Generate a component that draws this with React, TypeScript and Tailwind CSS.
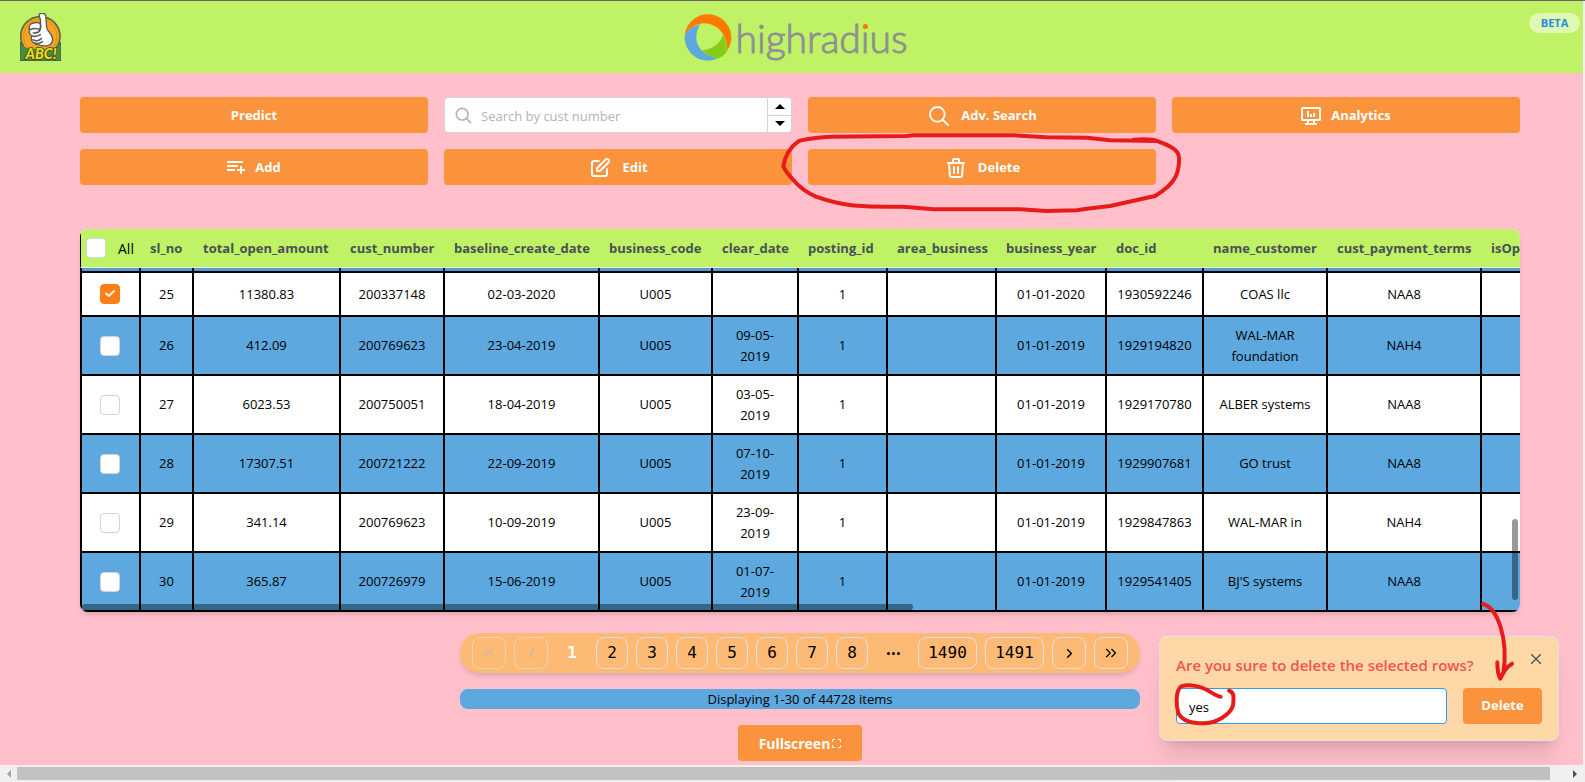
import type { ReactNode } from "react";
import { HiOutlinePencilAlt, HiOutlineTrash } from "react-icons/hi";
import { IoSearchOutline } from "react-icons/io5";
import { ChevronLeft, ChevronRight, ChevronsLeft, ChevronsRight } from "lucide-react";

const columns = [
  { name: "sl_no", width: "w-[53px]" },
  { name: "total_open_amount", width: "w-[147px]" },
  { name: "cust_number", width: "w-[104px]" },
  { name: "baseline_create_date", width: "w-[155px]" },
  { name: "business_code", width: "w-[113px]" },
  { name: "clear_date", width: "w-[86px]" },
  { name: "posting_id", width: "w-[89px]" },
  { name: "area_business", width: "w-[109px]" },
  { name: "business_year", width: "w-[110px]" },
  { name: "doc_id", width: "w-[97px]" },
  { name: "name_customer", width: "w-[124px]" },
  { name: "cust_payment_terms", width: "w-[154px]" },
  { name: "isOpen", width: "w-[120px]" },
];

const rows = [
  ["25", "11380.83", "200337148", "02-03-2020", "U005", "", "1", "", "01-01-2020", "1930592246", "COAS llc", "NAA8", ""],
  ["26", "412.09", "200769623", "23-04-2019", "U005", "09-05-2019", "1", "", "01-01-2019", "1929194820", "WAL-MAR foundation", "NAH4", ""],
  ["27", "6023.53", "200750051", "18-04-2019", "U005", "03-05-2019", "1", "", "01-01-2019", "1929170780", "ALBER systems", "NAA8", ""],
  ["28", "17307.51", "200721222", "22-09-2019", "U005", "07-10-2019", "1", "", "01-01-2019", "1929907681", "GO trust", "NAA8", ""],
  ["29", "341.14", "200769623", "10-09-2019", "U005", "23-09-2019", "1", "", "01-01-2019", "1929847863", "WAL-MAR in", "NAH4", ""],
  ["30", "365.87", "200726979", "15-06-2019", "U005", "01-07-2019", "1", "", "01-01-2019", "1929541405", "BJ'S systems", "NAA8", ""],
];

function AddIcon() {
  return (
    <svg width="18" height="13" viewBox="0 0 18 13" fill="currentColor" aria-hidden="true">
      <path d="M0 0h16v2H0zM0 4h11v2H0zM0 8h8v2H0zM13 5h2v3h3v2h-3v3h-2v-3h-3V8h3z" />
    </svg>
  );
}

function AnalyticsIcon() {
  return (
    <svg width="20" height="18" viewBox="0 0 20 18" fill="currentColor" aria-hidden="true">
      <path
        fillRule="evenodd"
        d="M1.500 0h17A1.500 1.500 0 0 1 20 1.500v11a1.500 1.500 0 0 1-1.500 1.500H14v2h2v2H4v-2h2v-2H1.500A1.500 1.500 0 0 1 0 12.500v-11A1.500 1.500 0 0 1 1.500 0zM2 2v10h16V2zM8 14v2h4v-2z"
      />
      <path d="M6 4h2v6H6zM9 7h2v3H9zM12 6h2v4h-2z" />
    </svg>
  );
}

function ThumbsUpLogo() {
  return (
    <svg width="41" height="48" viewBox="0 0 123 144" role="img" aria-label="ABC">
      <path d="M0 90h123v54H0z" fill="#4d8b3a" stroke="#3f5a4a" strokeWidth="4" />
      <circle cx="61" cy="70" r="59" fill="#f9a51f" stroke="#5c6a3c" strokeWidth="5" />
      <circle cx="61" cy="70" r="50" fill="none" stroke="#d98a22" strokeWidth="3" />
      <path d="M2 98c30 14 90 14 119 0v44H2z" fill="#4d8b3a" />
      <path
        d="M57 6c2-7 18-7 20 1 2 15 1 28 4 40 4 10 16 18 17 30 0 12-7 20-13 20-14 4-36 0-46-9-7-7-6-14-3-19-8-5-11-12-7-19-3-9-1-17 11-20 9-3 15-2 21 2 3-9-2-17-4-26z"
        fill="#fff"
        stroke="#5b5b5b"
        strokeWidth="4"
        strokeLinejoin="round"
      />
      <path
        d="M29 50c10-4 22-5 31 1-2 8-12 9-20 9M36 69c8 2 17 1 25-4M39 80c8 5 18 3 25-3M44 90c9 3 18 0 23-4M61 32c3 10 0 16-3 20"
        fill="none"
        stroke="#5b5b5b"
        strokeWidth="5"
        strokeLinecap="round"
      />
      <text
        x="63"
        y="138"
        textAnchor="middle"
        fontFamily="Lato, sans-serif"
        fontWeight="900"
        fontStyle="italic"
        fontSize="43"
        fill="#e9dc1a"
        stroke="#3d4a1c"
        strokeWidth="5"
        paintOrder="stroke"
      >
        ABC!
      </text>
    </svg>
  );
}

function HighradiusLogo() {
  return (
    <div className="flex items-center gap-1">
      <svg width="48" height="48" viewBox="71 38 144 144" aria-hidden="true">
        <path d="M73 108A70 70 0 1 1 200 152C203 108 175 70 130 69C100 72 80 90 73 108Z" fill="#ff7a00" />
        <path d="M120 72C90 80 73 97 73 110A70 70 0 0 0 173 174C130 165 108 140 108 112C108 95 114 80 120 72Z" fill="#5da8df" />
        <path d="M188 104C202 124 198 144 200 153C192 166 182 172 173 174C155 172 135 160 125 150C155 148 180 130 188 104Z" fill="#84cc16" />
      </svg>
      <span className="pt-[2px] font-['Lato',sans-serif] text-[39px] leading-[48px] font-light text-[#8f9094] [-webkit-text-stroke:1px_#8f9094]">
        highrad
        <span className="relative">
          i
          <span className="absolute top-[9px] left-[2px] size-[5px] rounded-full bg-[#ff7a00]" />
        </span>
        us
      </span>
    </div>
  );
}

function ActionButton({ icon, children }: { icon?: ReactNode; children: ReactNode }) {
  return (
    <button
      type="button"
      className="flex h-9 items-center justify-center gap-[10px] rounded bg-[#fb923c] pt-px text-[13px] font-bold text-white"
    >
      {icon}
      {children}
    </button>
  );
}

function TickBox({ label, checked = false }: { label: string; checked?: boolean }) {
  return (
    <span className="relative block size-5">
      <input
        type="checkbox"
        aria-label={label}
        defaultChecked={checked}
        className="peer block size-5 appearance-none rounded border border-[#ced4da] bg-white checked:border-[#fd7e14] checked:bg-[#fd7e14]"
      />
      <svg
        viewBox="0 0 10 7"
        className="pointer-events-none absolute top-[6px] left-[5px] hidden h-[7px] w-[10px] peer-checked:block"
        fill="none"
        stroke="#fff"
        strokeWidth="1.800"
        strokeLinecap="round"
        strokeLinejoin="round"
        aria-hidden="true"
      >
        <path d="M1 3.500 3.800 6 9 1" />
      </svg>
    </span>
  );
}

function SearchBox() {
  return (
    <div className="flex h-9 rounded border border-[#ced4da] bg-white">
      <label htmlFor="cust-search" className="flex w-9 items-center justify-center text-[#adb5bd]">
        <IoSearchOutline size={19} className="[&_path]:stroke-[44]" aria-hidden="true" />
        <span className="sr-only">Customer number</span>
      </label>
      <input
        id="cust-search"
        type="text"
        placeholder="Search by cust number"
        className="min-w-0 flex-1 pt-px text-[13px] leading-6 outline-none placeholder:text-[#adb5bd]"
      />
      <div className="flex w-6 flex-col border-l border-[#ced4da]">
        <button type="button" aria-label="Increase" className="flex flex-1 items-center justify-center border-b border-[#ced4da]">
          <svg width="10" height="5" viewBox="0 0 10 5" aria-hidden="true">
            <path d="M0 5 5 0l5 5z" />
          </svg>
        </button>
        <button type="button" aria-label="Decrease" className="flex flex-1 items-center justify-center">
          <svg width="10" height="5" viewBox="0 0 10 5" aria-hidden="true">
            <path d="M0 0h10L5 5z" />
          </svg>
        </button>
      </div>
    </div>
  );
}

function InvoiceTable() {
  return (
    <div className="relative mt-11 overflow-hidden rounded-lg bg-white shadow-md">
      <table className="w-[1522px] table-fixed border-separate border-spacing-0 text-[13px] leading-[21px] text-black">
        <thead>
          <tr className="h-[39px] bg-[#bff264] text-left text-[#495057]">
            <th className="w-[61px] border-b border-l border-b-[#e9ecef] border-l-black pl-[5px]">
              <div className="flex items-center gap-3 text-[14px] font-normal text-black">
                <TickBox label="Select all rows" />
                <span>All</span>
              </div>
            </th>
            {columns.map((c) => (
              <th key={c.name} className={`${c.width} border-b border-[#e9ecef] pl-[9px] font-bold whitespace-nowrap`}>
                {c.name}
              </th>
            ))}
          </tr>
        </thead>
        <tbody className="text-center">
          <tr className="h-[5px] bg-[#549acc]" aria-hidden="true">
            <td className="border-r-2 border-b-2 border-l-2 border-black p-0" />
            {columns.map((c) => (
              <td key={c.name} className="border-r-2 border-b-2 border-black p-0" />
            ))}
          </tr>
          {rows.map((row, i) => (
            <tr key={row[0]} className={`${i === 0 ? "h-[44px]" : "h-[59px]"} ${i % 2 ? "bg-[#5da8df]" : "bg-white"}`}>
              <td className="border-r-2 border-b-2 border-l-2 border-black px-[18px] py-0">
                <TickBox label={`Select row ${row[0]}`} checked={i === 0} />
              </td>
              {row.map((cell, j) => (
                <td key={j} className="border-r-2 border-b-2 border-black px-[9px] py-0">
                  {cell}
                </td>
              ))}
            </tr>
          ))}
        </tbody>
      </table>
      <div className="absolute bottom-[2px] left-[2px] h-[6px] w-15/26 rounded-full bg-black/40" />
      <div className="absolute right-[2px] bottom-3 h-[81px] w-[6px] rounded-full bg-black/40" />
    </div>
  );
}

const pageItem = "flex h-8 items-center justify-center rounded-lg border border-[#dee2e6]";

function Pagination() {
  return (
    <nav
      aria-label="Pages"
      className="mt-[21px] flex h-10 w-[680px] items-center gap-2 rounded-full bg-[#fdba74] px-3 font-['DejaVu_Sans_Mono',monospace] text-[16px] text-black shadow-md"
    >
      <button type="button" disabled aria-label="First page" className={`${pageItem} w-[34px] text-[#adb5bd] opacity-60`}>
        <ChevronsLeft size={18} strokeWidth={1.5} />
      </button>
      <button type="button" disabled aria-label="Previous page" className={`${pageItem} w-[34px] text-[#adb5bd] opacity-60`}>
        <ChevronLeft size={15} strokeWidth={2} />
      </button>
      <button type="button" aria-current="page" className="flex size-8 items-center justify-center font-bold text-white">
        1
      </button>
      {["2", "3", "4", "5", "6", "7", "8"].map((p) => (
        <button key={p} type="button" className={`${pageItem} w-8`}>
          {p}
        </button>
      ))}
      <span className="flex h-8 w-[34px] items-center justify-center gap-[2px]" aria-label="More pages">
        <span className="size-[3px] rounded-full bg-black" />
        <span className="size-[3px] rounded-full bg-black" />
        <span className="size-[3px] rounded-full bg-black" />
      </span>
      {["1490", "1491"].map((p) => (
        <button key={p} type="button" className={`${pageItem} w-[59px]`}>
          {p}
        </button>
      ))}
      <button type="button" aria-label="Next page" className={`${pageItem} w-[34px]`}>
        <ChevronRight size={15} strokeWidth={2.5} />
      </button>
      <button type="button" aria-label="Last page" className={`${pageItem} w-[34px]`}>
        <ChevronsRight size={18} strokeWidth={1.5} />
      </button>
    </nav>
  );
}

function DeleteDialog() {
  return (
    <section
      aria-label="Confirm delete"
      className="absolute right-[26px] bottom-[41px] h-[105px] w-[400px] rounded-lg border border-[#dee2e6] bg-[#ffd8a8] px-4 pt-4 shadow-xl"
    >
      <div className="flex items-start justify-between">
        <label htmlFor="confirm-delete" className="text-[15px] leading-6 font-semibold text-[#f55252]">
          Are you sure to delete the selected rows?
        </label>
        <button type="button" aria-label="Close" className="flex h-3 w-3 items-center justify-center text-[#495057]">
          <svg width="10" height="10" viewBox="0 0 10 10" fill="none" stroke="currentColor" strokeWidth="1.300" aria-hidden="true">
            <path d="m0 0 10 10M10 0 0 10" />
          </svg>
        </button>
      </div>
      <div className="mt-[11px] flex gap-4">
        <input
          id="confirm-delete"
          type="text"
          defaultValue="yes"
          className="h-9 min-w-0 flex-1 rounded border border-[#339af0] bg-white px-3 pt-[2px] text-[13px] text-black outline-none"
        />
        <button type="button" className="h-9 w-[79px] rounded bg-[#fb923c] text-[13px] font-bold text-white">
          Delete
        </button>
      </div>
    </section>
  );
}

function PenMarks() {
  return (
    <>
      <svg
        className="pointer-events-none absolute top-[79px] left-[780px]"
        width="420"
        height="140"
        viewBox="0 0 1260 420"
        fill="none"
        stroke="#e81b1b"
        strokeWidth="12"
        strokeLinecap="round"
        strokeLinejoin="round"
        aria-hidden="true"
      >
        <path d="M1132 183L990 181L920 173L800 172L700 166H400L380 168L150 170C105 174 75 176 55 184C25 205 15 230 10 258C14 272 25 282 38 298C60 325 80 338 108 350C145 363 180 372 215 376C250 381 290 380 370 380L460 388H720L800 393L890 391L920 386L990 378L1125 348C1150 333 1175 315 1187 290C1196 270 1198 255 1197 232C1195 205 1160 195 1135 184C1125 178 1090 176 1062 179" />
      </svg>
      <svg
        className="pointer-events-none absolute right-0 bottom-0"
        width="455"
        height="282"
        viewBox="0 0 1365 846"
        fill="none"
        stroke="#e81b1b"
        strokeWidth="12"
        strokeLinecap="round"
        strokeLinejoin="round"
        aria-hidden="true"
      >
        <path d="M272 590C255 588 240 572 215 563C190 554 170 554 153 559C136 575 138 615 145 640C160 664 185 671 225 670C260 668 300 645 309 617C312 590 312 575 297 572" />
        <path d="M1059 312C1105 325 1135 420 1120 520M1102 487C1102 505 1104 525 1111 536C1120 515 1130 500 1146 491" />
      </svg>
    </>
  );
}

export default function App() {
  return (
    <div className="relative flex min-h-screen flex-col overflow-hidden border-t border-[#666] bg-[#ffc0cb] font-['Open_Sans','Noto_Sans',sans-serif]">
      <div className="flex flex-1 flex-col border-r-2 border-[#f0f0f0]">
        <header className="relative flex h-[72px] items-center justify-center bg-[#bff264] pl-2">
          <div className="absolute top-3 left-5">
            <ThumbsUpLogo />
          </div>
          <HighradiusLogo />
          <span className="absolute top-3 right-[3px] flex h-5 w-[51px] items-center justify-center rounded-full bg-white/50 text-[11px] font-bold text-[#228be6]">
            BETA
          </span>
        </header>

        <main className="flex flex-col pt-6 pr-[63px] pl-20">
          <div className="grid grid-cols-4 gap-4">
            <ActionButton>Predict</ActionButton>
            <SearchBox />
            <ActionButton icon={<IoSearchOutline size={24} className="[&_path]:stroke-[40]" />}>Adv. Search</ActionButton>
            <ActionButton icon={<AnalyticsIcon />}>Analytics</ActionButton>
            <ActionButton icon={<AddIcon />}>Add</ActionButton>
            <ActionButton icon={<HiOutlinePencilAlt size={24} />}>Edit</ActionButton>
            <ActionButton icon={<HiOutlineTrash size={24} />}>Delete</ActionButton>
          </div>

          <InvoiceTable />

          <div className="flex flex-col items-center">
            <Pagination />
            <p className="mt-4 h-5 w-[680px] rounded-lg bg-[#5da8df] text-center text-[13px] leading-5 text-black">
              Displaying 1-30 of 44728 items
            </p>
            <button
              type="button"
              className="mt-4 flex h-9 w-[124px] items-center justify-center gap-[2px] rounded bg-[#fb923c] text-[14px] font-bold text-white"
            >
              Fullscreen
              <svg width="9" height="9" viewBox="0 0 9 9" fill="none" stroke="currentColor" aria-hidden="true">
                <path d="M.5 3V.5H3M6 .5h2.500V3M8.500 6v2.500H6M3 8.500H.5V6" />
              </svg>
            </button>
          </div>
        </main>
      </div>

      <div className="flex h-[17px] items-center bg-[#f0f0f0]">
        <span className="flex w-[17px] justify-center">
          <svg width="4" height="8" viewBox="0 0 4 8" fill="#a3a3a3" aria-hidden="true">
            <path d="M4 0v8L0 4z" />
          </svg>
        </span>
        <span className="h-[13px] flex-1 bg-[#c1c1c1]" />
        <span className="flex w-[35px] justify-end pr-2">
          <svg width="4" height="8" viewBox="0 0 4 8" fill="#505050" aria-hidden="true">
            <path d="M0 0v8l4-4z" />
          </svg>
        </span>
      </div>

      <DeleteDialog />
      <PenMarks />
    </div>
  );
}
